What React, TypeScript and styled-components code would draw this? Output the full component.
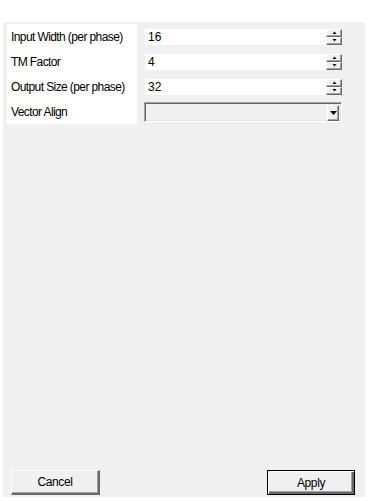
import {Fragment} from 'react';
import styled, {createGlobalStyle} from 'styled-components';

const GlobalStyle = createGlobalStyle`
  html, body {
    margin: 0;
    padding: 0;
    background: #ffffff;
  }
  body {
    font-family: "Liberation Sans", Arial, sans-serif;
    font-size: 11px;
    color: #000000;
  }
`;

const Panel = styled.div`
  margin: 22px 3px 0 3px;
  height: 475px;
  background-color: #f0f0f0;
  display: flex;
  flex-direction: column;
  justify-content: space-between;
  padding: 2px 0 2px 4px;
  box-sizing: border-box;
`;

const Form = styled.div`
  display: grid;
  grid-template-columns: 130px 198px;
  grid-auto-rows: 25px;
  column-gap: 7px;
  align-items: center;
`;

const Label = styled.div`
  background-color: #ffffff;
  height: 100%;
  display: flex;
  align-items: center;
  padding-left: 4px;
  white-space: nowrap;
  font-size: 12px;
  letter-spacing: -0.6px;
`;

const Spin = styled.div`
  display: flex;
  height: 16px;
  margin-left: 1px;
`;

const SpinText = styled.div`
  flex: 1;
  background-color: #ffffff;
  display: flex;
  align-items: center;
  padding-left: 3px;
  font-size: 12px;
`;

const SpinButtons = styled.div`
  width: 16px;
  display: flex;
  flex-direction: column;
`;

const RaisedButton = styled.div<{$h: number}>`
  height: ${p => p.$h}px;
  box-sizing: border-box;
  background-color: #f0f0f0;
  border-top: 1px solid #ffffff;
  border-left: 1px solid #ffffff;
  border-right: 1px solid #696969;
  border-bottom: 1px solid #696969;
  box-shadow: inset -1px -1px 0 #a0a0a0;
  display: flex;
  align-items: center;
  justify-content: center;
`;

const Combo = styled.div`
  height: 20px;
  box-sizing: border-box;
  border-top: 1px solid #a0a0a0;
  border-left: 1px solid #a0a0a0;
  border-right: 1px solid #ffffff;
  border-bottom: 1px solid #ffffff;
  box-shadow: inset 1px 1px 0 #696969, inset -1px -1px 0 #e3e3e3;
  background-color: #f0f0f0;
  display: flex;
  justify-content: flex-end;
  padding: 2px;
`;

const ComboButton = styled(RaisedButton)`
  width: 12px;
`;

const Footer = styled.div`
  display: flex;
  justify-content: space-between;
  padding: 0 10px 0 4px;
`;

const Button = styled.button<{$default?: boolean}>`
  width: ${p => (p.$default ? 88 : 89)}px;
  height: 25px;
  box-sizing: border-box;
  font-family: "Liberation Sans", Arial, sans-serif;
  font-size: 12px;
  color: #000000;
  background-color: #f0f0f0;
  border-style: solid;
  border-width: ${p => (p.$default ? '1px' : '1px 2px 2px 1px')};
  border-color: ${p =>
    p.$default ? '#000000' : '#ffffff #696969 #696969 #ffffff'};
  box-shadow: ${p =>
    p.$default
      ? 'inset 1px 1px 0 #ffffff, inset -2px -2px 0 #696969, inset -3px -3px 0 #a0a0a0'
      : 'inset -1px -1px 0 #a0a0a0'};
  padding: 0;
  letter-spacing: -0.4px;
`;

function Arrow({up}: {up?: boolean}) {
  return (
    <svg width="5" height="3" viewBox="0 0 5 3">
      <path d={up ? 'M2.5 0.5 L4.5 3 L0.5 3 Z' : 'M0.5 0 L4.5 0 L2.5 2.5 Z'} fill="#000" />
    </svg>
  );
}

function NumberField({value}: {value: string}) {
  return (
    <Spin>
      <SpinText>{value}</SpinText>
      <SpinButtons>
        <RaisedButton $h={8}>
          <Arrow up />
        </RaisedButton>
        <RaisedButton $h={8}>
          <Arrow />
        </RaisedButton>
      </SpinButtons>
    </Spin>
  );
}

const fields = [
  {label: 'Input Width (per phase)', value: '16'},
  {label: 'TM Factor', value: '4'},
  {label: 'Output Size (per phase)', value: '32'},
];

export default function App() {
  return (
    <>
      <GlobalStyle />
      <Panel>
        <Form>
          {fields.map(f => (
            <Fragment key={f.label}>
              <Label>{f.label}</Label>
              <NumberField value={f.value} />
            </Fragment>
          ))}
          <Label>Vector Align</Label>
          <Combo>
            <ComboButton $h={16}>
              <svg width="7" height="4" viewBox="0 0 7 4">
                <path d="M0 0 L7 0 L3.5 4 Z" fill="#000" />
              </svg>
            </ComboButton>
          </Combo>
        </Form>
        <Footer>
          <Button>Cancel</Button>
          <Button $default>Apply</Button>
        </Footer>
      </Panel>
    </>
  );
}
